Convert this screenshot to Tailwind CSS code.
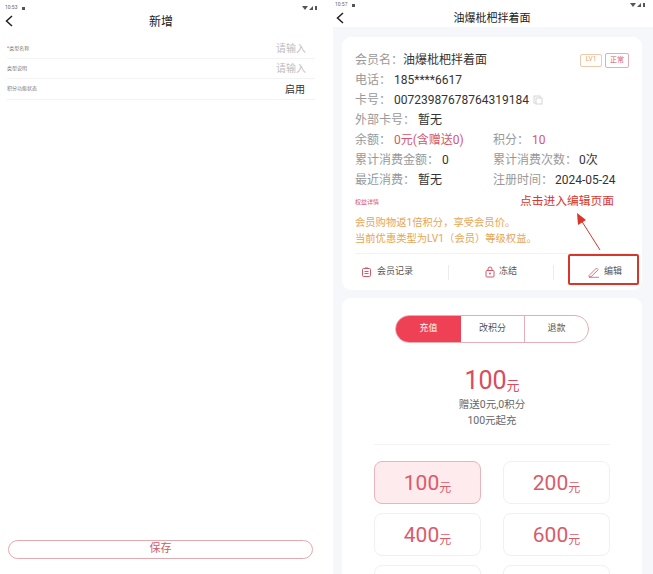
<!DOCTYPE html>
<html lang="zh">
<head>
<meta charset="utf-8">
<script src="https://cdn.jsdelivr.net/npm/@tailwindcss/browser@4"></script>
</head>
<body class="bg-white">
<div class="relative flex w-[653px] h-[574px] overflow-hidden bg-white font-['Roboto','Noto_Sans_CJK_SC',sans-serif] text-[#333]">

  <!-- left phone -->
  <section class="flex flex-col w-[322px] h-full shrink-0">
    <div class="flex items-center justify-between h-[12px] pl-[5px] pr-[5px] pt-[4px] text-[5px] text-[#666]">
      <div class="flex items-center gap-[5px]"><span>10:53</span><span class="w-[3px] h-[3px] bg-[#555]"></span></div>
      <div class="flex items-center gap-[1px]">
        <svg width="6" height="4" viewBox="0 0 6 4"><path d="M0 0h6L3 4z" fill="#555"/></svg>
        <svg width="4" height="4" viewBox="0 0 4 4"><path d="M0 4L4 0v4z" fill="#555"/></svg>
        <span class="ml-[1px] w-[2px] h-[4px] bg-[#555]"></span>
      </div>
    </div>
    <header class="relative flex items-center justify-center h-[20px] text-[12px] text-[#222]">
      <svg class="absolute left-[5px] top-[3px]" width="8" height="12" viewBox="0 0 8 12" fill="none"><path d="M7 1L1.5 6 7 11" stroke="#222" stroke-width="1.5"/></svg>
      新增
    </header>
    <div class="flex flex-col pl-[7px] mt-[7px] w-[315px]">
      <div class="flex items-center justify-between h-[20px] border-b border-[#f3f3f3] pr-[9px]">
        <span class="text-[5px] text-[#777]"><span class="text-[#e0404f]">*</span>类型名称</span>
        <span class="text-[10px] text-[#bdbdbd]">请输入</span>
      </div>
      <div class="flex items-center justify-between h-[20px] border-b border-[#f3f3f3] pr-[9px]">
        <span class="text-[5px] text-[#777]">类型说明</span>
        <span class="text-[10px] text-[#bdbdbd]">请输入</span>
      </div>
      <div class="flex items-center justify-between h-[21px] border-b border-[#f3f3f3] pr-[10px]">
        <span class="text-[5px] text-[#777]">积分功能状态</span>
        <span class="text-[10px] text-[#333]">启用</span>
      </div>
    </div>
    <div class="mt-auto mb-[15px] ml-[8px] w-[305px] h-[19px] flex items-center justify-center rounded-full border border-[#e3a9ae] text-[11px] text-[#cf5a66]">保存</div>
  </section>

  <!-- right phone -->
  <section class="flex flex-col ml-[11px] w-[320px] h-full shrink-0 bg-[#f6f7fb]">
    <div class="bg-white">
      <div class="flex items-center justify-between h-[10px] pl-[2px] pr-[8px] text-[5px] text-[#666]">
        <div class="flex items-center gap-[5px]"><span>10:57</span><span class="w-[3px] h-[3px] bg-[#555]"></span></div>
        <div class="flex items-center gap-[1px]">
          <svg width="6" height="4" viewBox="0 0 6 4"><path d="M0 0h6L3 4z" fill="#555"/></svg>
          <svg width="4" height="4" viewBox="0 0 4 4"><path d="M0 4L4 0v4z" fill="#555"/></svg>
          <span class="ml-[1px] w-[2px] h-[4px] bg-[#555]"></span>
        </div>
      </div>
      <header class="relative flex items-center justify-center h-[17px] pt-[1px] text-[11px] text-[#222]">
        <svg class="absolute left-[3px] top-[2px]" width="8" height="12" viewBox="0 0 8 12" fill="none"><path d="M7 1L1.5 6 7 11" stroke="#222" stroke-width="1.5"/></svg>
        <span class="ml-[-2px]">油爆枇杷拌着面</span>
      </header>
    </div>

    <div class="ml-[9px] mr-[11px] mt-[10px] h-[253px] rounded-[9px] bg-white px-[13px] pt-[13px] flex flex-col text-[12px]">
      <div class="flex items-center justify-between h-[20px]">
        <div class="flex"><span class="text-[#999]">会员名：</span><span class="text-[#333]">油爆枇杷拌着面</span></div>
        <div class="flex gap-[3px]">
          <span class="flex items-center justify-center w-[22px] h-[13px] mt-[1px] rounded-[2px] border border-[#efc9a8] text-[6.5px] text-[#e8a467]">LV1</span>
          <span class="flex items-center justify-center w-[24px] h-[15px] rounded-[2px] border border-[#e5acb2] text-[7px] text-[#d8606c]">正常</span>
        </div>
      </div>
      <div class="flex items-center h-[20px]"><span class="text-[#999] w-[39px]">电话：</span><span class="text-[#333]">185****6617</span></div>
      <div class="flex items-center h-[20px]"><span class="text-[#999] w-[39px]">卡号：</span><span class="text-[#333]">00723987678764319184</span>
        <svg class="ml-[4px]" width="10" height="10" viewBox="0 0 10 10" fill="none"><rect x="1" y="1" width="6" height="7" stroke="#d5d5d5"/><rect x="3" y="3" width="6" height="6" fill="#fff" stroke="#d5d5d5"/></svg>
      </div>
      <div class="flex items-center h-[20px]"><span class="text-[#999] w-[63px]">外部卡号：</span><span class="text-[#333]">暂无</span></div>
      <div class="grid grid-cols-[138px_1fr] items-center h-[20px]">
        <div class="flex"><span class="text-[#999] w-[39px]">余额：</span><span class="text-[#d6566a]">0元(含赠送0)</span></div>
        <div class="flex"><span class="text-[#999] w-[39px]">积分：</span><span class="text-[#d6566a]">10</span></div>
      </div>
      <div class="grid grid-cols-[138px_1fr] items-center h-[20px]">
        <div class="flex"><span class="text-[#999] w-[87px]">累计消费金额：</span><span class="text-[#333]">0</span></div>
        <div class="flex"><span class="text-[#999] w-[86px]">累计消费次数：</span><span class="text-[#333]">0次</span></div>
      </div>
      <div class="grid grid-cols-[138px_1fr] items-center h-[20px]">
        <div class="flex"><span class="text-[#999] w-[63px]">最近消费：</span><span class="text-[#333]">暂无</span></div>
        <div class="flex"><span class="text-[#999] w-[62px]">注册时间：</span><span class="text-[#333]">2024-05-24</span></div>
      </div>
      <div class="mt-[5px] h-[12px] flex items-center text-[6px] text-[#d6566a]">权益详情</div>
      <div class="mt-[8px] text-[10.3px] leading-[16px] text-[#e8a552]">
        <p>会员购物返1倍积分，享受会员价。</p>
        <p>当前优惠类型为LV1（会员）等级权益。</p>
      </div>
      <div class="mt-[6px] border-t border-[#f2f2f2] flex flex-1 items-center text-[9px] text-[#555]">
        <div class="w-[93px] flex items-center pl-[7px] gap-[6px]">
          <svg width="9" height="10" viewBox="0 0 9 10" fill="none"><rect x="0.5" y="1.5" width="8" height="8" rx="1" stroke="#d6566a"/><path d="M3 1h3M2.5 4.5h4M2.5 6.5h4" stroke="#d6566a"/></svg>
          会员记录
        </div>
        <span class="w-px h-[15px] bg-[#ececec]"></span>
        <div class="w-[104px] flex items-center justify-center gap-[4px]">
          <svg width="10" height="12" viewBox="0 0 10 12" fill="none"><rect x="1" y="4.5" width="8" height="6.5" rx="1" stroke="#d6566a"/><path d="M3 4.5V3a2 2 0 014 0v1.5" stroke="#d6566a"/><circle cx="5" cy="7.5" r="1" fill="#d6566a"/></svg>
          冻结
        </div>
        <span class="w-px h-[15px] bg-[#ececec]"></span>
        <div class="flex-1 flex items-center justify-end pr-[7px] gap-[4px]">
          <svg width="12" height="12" viewBox="0 0 12 12" fill="none"><path d="M1 9.5L8.5 2l1.7 1.7L3 10.8H1z M1 11.3h10" stroke="#d6566a" stroke-width=".8"/></svg>
          编辑
        </div>
      </div>
    </div>

    <div class="ml-[9px] mr-[11px] mt-[8px] flex-1 rounded-t-[9px] bg-white px-[32px] pt-[17px] flex flex-col items-center overflow-hidden">
      <div class="flex w-[194px] h-[28px] rounded-full border border-[#e5aeb4] overflow-hidden text-[9px] text-[#555] shrink-0">
        <div class="w-[65px] flex items-center justify-center bg-[#ef4156] text-white">充值</div>
        <div class="w-[64px] flex items-center justify-center border-r border-[#e5aeb4]">改积分</div>
        <div class="flex-1 flex items-center justify-center">退款</div>
      </div>
      <div class="mt-[25px] h-[30px] flex items-end text-[#dc4a5c] leading-none"><span class="text-[25px]">100</span><span class="text-[13px] mb-[1px]">元</span></div>
      <div class="mt-[4px] text-[10.5px] leading-[16px] text-[#666] text-center">
        <p>赠送0元,0积分</p>
        <p>100元起充</p>
      </div>
      <div class="mt-[15px] w-full h-px bg-[#f3f3f3] shrink-0"></div>
      <div class="mt-[16px] w-full grid grid-cols-[107px_107px] justify-between gap-y-[9px]">
        <div class="h-[43px] rounded-[8px] border border-[#e8b5bb] bg-[#fdebee] flex items-end justify-center pb-[9px] text-[#dc5a68] leading-none"><span class="text-[21px]">100</span><span class="text-[12px]">元</span></div>
        <div class="h-[43px] rounded-[8px] border border-[#f3eff0] flex items-end justify-center pb-[9px] text-[#dc5a68] leading-none"><span class="text-[21px]">200</span><span class="text-[12px]">元</span></div>
        <div class="h-[43px] rounded-[8px] border border-[#f3eff0] flex items-end justify-center pb-[9px] text-[#dc5a68] leading-none"><span class="text-[21px]">400</span><span class="text-[12px]">元</span></div>
        <div class="h-[43px] rounded-[8px] border border-[#f3eff0] flex items-end justify-center pb-[9px] text-[#dc5a68] leading-none"><span class="text-[21px]">600</span><span class="text-[12px]">元</span></div>
        <div class="h-[43px] rounded-[8px] border border-[#f3eff0]"></div>
        <div class="h-[43px] rounded-[8px] border border-[#f3eff0]"></div>
      </div>
    </div>
  </section>

  <!-- annotation overlay -->
  <div class="absolute left-[520px] top-[193px] text-[11.75px] leading-[16px] text-[#d9352b] whitespace-nowrap">点击进入编辑页面</div>
  <svg class="absolute left-[570px] top-[210px]" width="35" height="44" viewBox="0 0 35 44" fill="none">
    <path d="M30 40L11 10" stroke="#d9352b" stroke-width="1"/>
    <path d="M7 3L16 10 8 15z" fill="#d9352b"/>
  </svg>
  <div class="absolute left-[568px] top-[254px] w-[71px] h-[31px] border-2 border-[#d9352b] rounded-[2px]"></div>
</div>
</body>
</html>
